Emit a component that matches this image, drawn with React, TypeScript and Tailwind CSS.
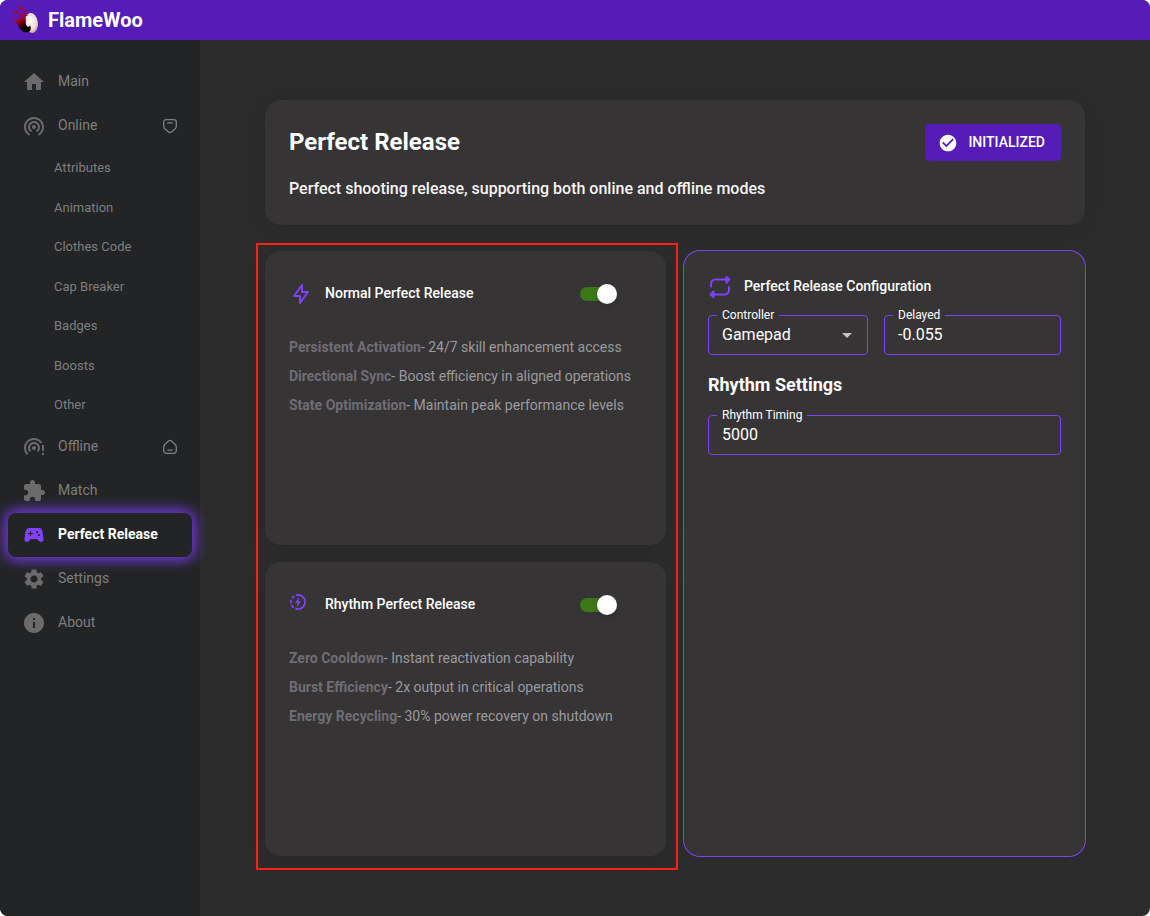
import React, { useState } from 'react';
import {
  MdArrowDropDown,
  MdCheckCircle,
  MdExtension,
  MdHome,
  MdInfo,
  MdSettings,
  MdSportsEsports,
  MdWifiTethering,
  MdWifiTetheringError,
} from 'react-icons/md';
import { TbBolt } from 'react-icons/tb';
import clsx from 'clsx';

interface NavItem {
  label: string;
  icon: React.ReactNode;
  trailing?: React.ReactNode;
  active?: boolean;
  children?: string[];
}

function Logo() {
  return (
    <svg viewBox="0 0 30 30" className="h-[30px] w-[30px]" aria-hidden="true">
      <defs>
        <linearGradient id="flame" x1="0" y1="0" x2="0.8" y2="1">
          <stop offset="0" stopColor="#e0000c" />
          <stop offset="0.4" stopColor="#a80010" />
          <stop offset="0.7" stopColor="#240008" />
          <stop offset="1" stopColor="#000000" />
        </linearGradient>
        <radialGradient id="ball" cx="0.45" cy="0.4" r="0.65">
          <stop offset="0" stopColor="#fffaf8" />
          <stop offset="0.65" stopColor="#f0dcd8" />
          <stop offset="1" stopColor="#b08a8c" />
        </radialGradient>
      </defs>
      <ellipse cx="21.500" cy="18" rx="6.500" ry="10" fill="url(#ball)" transform="rotate(-8 21.500 18)" />
      <path
        d="M0 14.500L8 15 6.500 12.500 11 14.500 10.500 10.500 15 12.500C17 15 14.500 18 17 21C18 22.500 19.500 22 20 20C21.500 23 21 27 17 27.300C12 27.500 9.500 24 8 20C7 17 4 15.500 0 14.500z"
        fill="url(#flame)"
      />
      <path
        d="M7 1l5 1.500 1 2.500-4.500-1.500zM12.500 4l3.500 1 .5 1.800-3.500-1zM2.500 6l5 .8 1 1.700-5-.8zM8 8l4.500 1 1 2-4.500-1zM13.500 8l3.500 1 .8 2-3.500-1z"
        fill="#b80012"
      />
    </svg>
  );
}

function ShieldIcon() {
  return (
    <svg viewBox="0 0 16 16" fill="none" stroke="currentColor" strokeWidth="1.3" strokeLinecap="round" strokeLinejoin="round" className="h-4 w-4" aria-hidden="true">
      <path d="M4 1.7h8a2.3 2.3 0 0 1 2.3 2.3v4.2c0 1.1-.5 2-1.3 2.7l-3.6 3a2.2 2.2 0 0 1-2.8 0L3 10.9c-.8-.7-1.3-1.6-1.3-2.7V4A2.3 2.3 0 0 1 4 1.7z" />
      <path d="M5.7 4.9h4.600" />
    </svg>
  );
}

function HouseIcon() {
  return (
    <svg viewBox="0 0 16 16" fill="none" stroke="currentColor" strokeWidth="1.3" strokeLinecap="round" strokeLinejoin="round" className="h-4 w-4" aria-hidden="true">
      <path d="M6.5 2.1a2.2 2.2 0 0 1 3 0L13 5.2c.8.7 1.3 1.7 1.3 2.8v3.8a2.5 2.5 0 0 1-2.5 2.5H4.2a2.5 2.5 0 0 1-2.5-2.5V8c0-1.1.5-2.1 1.3-2.8z" />
      <path d="M5.7 11.1h4.6" />
    </svg>
  );
}

// Half dashed, half solid ring around a small bolt
function ChargeIcon() {
  return (
    <svg viewBox="0 0 24 24" fill="none" stroke="currentColor" strokeWidth="2.4" className="h-[18px] w-[18px]" aria-hidden="true">
      <path d="M12 2.500a9.500 9.500 0 0 1 0 19" />
      <path d="M12 21.500A9.500 9.500 0 0 1 12 2.500" strokeDasharray="4.500 2.500" strokeDashoffset="1" />
      <path d="M13.500 5.500L8 13H11.300L10.500 18.500L16 11H12.700z" fill="currentColor" stroke="none" />
    </svg>
  );
}

function RepeatIcon() {
  return (
    <svg viewBox="0 0 24 24" fill="none" stroke="currentColor" strokeWidth="2" strokeLinecap="round" strokeLinejoin="round" className="h-6 w-6 text-[#8040ff]" aria-hidden="true">
      <path d="M3 11.500V9a4.500 4.500 0 0 1 4.500-4.500H20" />
      <path d="M21 12v3a4.500 4.500 0 0 1-4.500 4.500H4" />
      <path d="M18.500 2L21.500 4.500L18.500 7.500zM5.500 16.500L2.500 19.500L5.500 22z" fill="currentColor" />
    </svg>
  );
}

const NAV_ITEMS: NavItem[] = [
  { label: 'Main', icon: <MdHome /> },
  {
    label: 'Online',
    icon: <MdWifiTethering />,
    trailing: <ShieldIcon />,
    children: ['Attributes', 'Animation', 'Clothes Code', 'Cap Breaker', 'Badges', 'Boosts', 'Other'],
  },
  { label: 'Offline', icon: <MdWifiTetheringError />, trailing: <HouseIcon /> },
  { label: 'Match', icon: <MdExtension /> },
  { label: 'Perfect Release', icon: <MdSportsEsports />, active: true },
  { label: 'Settings', icon: <MdSettings /> },
  { label: 'About', icon: <MdInfo /> },
];

function Sidebar() {
  return (
    <nav className="w-[200px] shrink-0 bg-[#222425] px-2 pt-5 text-[#7e7f80]">
      <ul>
        {NAV_ITEMS.map((item) => (
          <li key={item.label}>
            <a
              href="#"
              className={clsx(
                'flex h-11 items-center rounded-lg px-3.5 text-sm',
                item.active && 'bg-[#222425] font-bold text-white shadow-[0_0_14px_3px_#7c3aed]'
              )}
            >
              <span className={clsx('mr-3 text-2xl', item.active ? 'text-[#8040ff]' : 'text-[#6b6b6b]')}>
                {item.icon}
              </span>
              <span className="flex-1 whitespace-nowrap pb-0.5">{item.label}</span>
              {item.trailing}
            </a>
            {item.children && (
              <ul className="grid h-[277px] auto-rows-fr">
                {item.children.map((child) => (
                  <li key={child}>
                    <a href="#" className="flex h-full items-center pl-[46px] text-[13px]">
                      {child}
                    </a>
                  </li>
                ))}
              </ul>
            )}
          </li>
        ))}
      </ul>
    </nav>
  );
}

interface SwitchProps {
  label: string;
}

function Switch({ label }: SwitchProps) {
  const [checked, setChecked] = useState(true);

  return (
    <label className="relative mr-6 flex h-[38px] w-[38px] cursor-pointer items-center">
      <input
        type="checkbox"
        role="switch"
        aria-label={label}
        checked={checked}
        onChange={(e) => setChecked(e.target.checked)}
        className="peer sr-only"
      />
      <span className="h-3.5 w-[34px] rounded-full bg-[#6b6b6b] peer-checked:bg-[#3c7718]" />
      <span className="absolute left-0 h-5 w-5 rounded-full bg-white shadow-md peer-checked:left-[17px]" />
    </label>
  );
}

interface FeatureCardProps {
  title: string;
  icon: React.ReactNode;
  features: [string, string][];
}

function FeatureCard({ title, icon, features }: FeatureCardProps) {
  return (
    <section className="flex-1 rounded-2xl bg-[#373435] p-6 shadow-[0_4px_20px_rgba(0,0,0,0.1)]">
      <div className="flex items-center">
        <span className="mr-3 h-6 w-6 text-2xl text-[#8040ff]">{icon}</span>
        <h2 className="flex-1 pb-0.5 text-sm font-medium text-white">{title}</h2>
        <Switch label={title} />
      </div>
      <ul className="mt-5 text-sm leading-[29px] text-[#9b9a9f]">
        {features.map(([name, text]) => (
          <li key={name}>
            <strong className="font-bold text-[#6f6d76]">{name}</strong>- {text}
          </li>
        ))}
      </ul>
    </section>
  );
}

interface FieldProps {
  id: string;
  label: string;
  className?: string;
  children: React.ReactNode;
}

function Field({ id, label, className, children }: FieldProps) {
  return (
    <fieldset className={clsx('relative min-w-0 rounded border border-[#8040ff] pb-[7px]', className)}>
      <legend className="ml-2 px-[5px] text-xs leading-4 text-white">
        <label htmlFor={id} className="block">{label}</label>
      </legend>
      {children}
    </fieldset>
  );
}

function ConfigCard() {
  return (
    <section className="rounded-2xl bg-[#373435] p-6 ring-1 ring-[#8040ff]">
      <div className="flex items-center gap-3">
        <RepeatIcon />
        <h2 className="pb-0.5 text-sm font-medium text-white">Perfect Release Configuration</h2>
      </div>
      <div className="mt-2 flex gap-4">
        <Field id="controller" label="Controller" className="w-40">
          <select id="controller" className="block h-6 w-full appearance-none bg-transparent px-[13px] text-base text-white outline-none">
            <option>Gamepad</option>
            <option>Keyboard</option>
          </select>
          <MdArrowDropDown className="pointer-events-none absolute right-2 top-0 h-6 w-6 text-[#c4c3c3]" />
        </Field>
        <Field id="delayed" label="Delayed" className="flex-1">
          <input id="delayed" defaultValue="-0.055" className="block h-6 w-full bg-transparent px-[13px] text-base text-white outline-none" />
        </Field>
      </div>
      <h3 className="mb-2 mt-4 text-lg font-bold text-white">Rhythm Settings</h3>
      <Field id="rhythm-timing" label="Rhythm Timing">
        <input id="rhythm-timing" defaultValue="5000" className="block h-6 w-full bg-transparent px-[13px] text-base text-white outline-none" />
      </Field>
    </section>
  );
}

export default function App() {
  return (
    <div className="flex min-h-screen flex-col overflow-hidden rounded-lg bg-[#2c2c2c] font-['Roboto',sans-serif]">
      <header className="flex h-10 items-center gap-2 bg-[#551cb8] pl-2.5">
        <Logo />
        <span className="text-xl font-bold text-white">FlameWoo</span>
      </header>

      <div className="flex flex-1">
        <Sidebar />

        <main className="min-w-0 flex-1 px-8 pt-[60px]">
          <div className="mx-auto max-w-[820px]">
            <section className="rounded-2xl bg-[#373435] p-6 shadow-[0_4px_20px_rgba(0,0,0,0.1)]">
              <div className="flex items-center justify-between">
                <h1 className="pb-0.5 text-2xl font-bold text-white">Perfect Release</h1>
                <button className="flex h-[37px] items-center gap-2.5 rounded bg-[#551cb8] pl-[13px] pr-4 text-sm font-medium uppercase text-white">
                  <MdCheckCircle className="h-5 w-5" />
                  <span className="pb-0.5">Initialized</span>
                </button>
              </div>
              <p className="mt-4 text-base font-medium text-[#f5f5f5]">
                Perfect shooting release, supporting both online and offline modes
              </p>
            </section>

            <div className="mt-[26px] grid min-h-[605px] grid-cols-2 gap-[18px]">
              <div className="relative flex flex-col gap-[17px]">
                <FeatureCard
                  title="Normal Perfect Release"
                  icon={<TbBolt />}
                  features={[
                    ['Persistent Activation', '24/7 skill enhancement access'],
                    ['Directional Sync', 'Boost efficiency in aligned operations'],
                    ['State Optimization', 'Maintain peak performance levels'],
                  ]}
                />
                <FeatureCard
                  title="Rhythm Perfect Release"
                  icon={<ChargeIcon />}
                  features={[
                    ['Zero Cooldown', 'Instant reactivation capability'],
                    ['Burst Efficiency', '2x output in critical operations'],
                    ['Energy Recycling', '30% power recovery on shutdown'],
                  ]}
                />
                {/* Highlight frame around both release modes */}
                <div className="pointer-events-none absolute -bottom-3.5 -left-[9px] -right-3 -top-2 border-2 border-[#ff2015]" />
              </div>
              <ConfigCard />
            </div>
          </div>
        </main>
      </div>
    </div>
  );
}
